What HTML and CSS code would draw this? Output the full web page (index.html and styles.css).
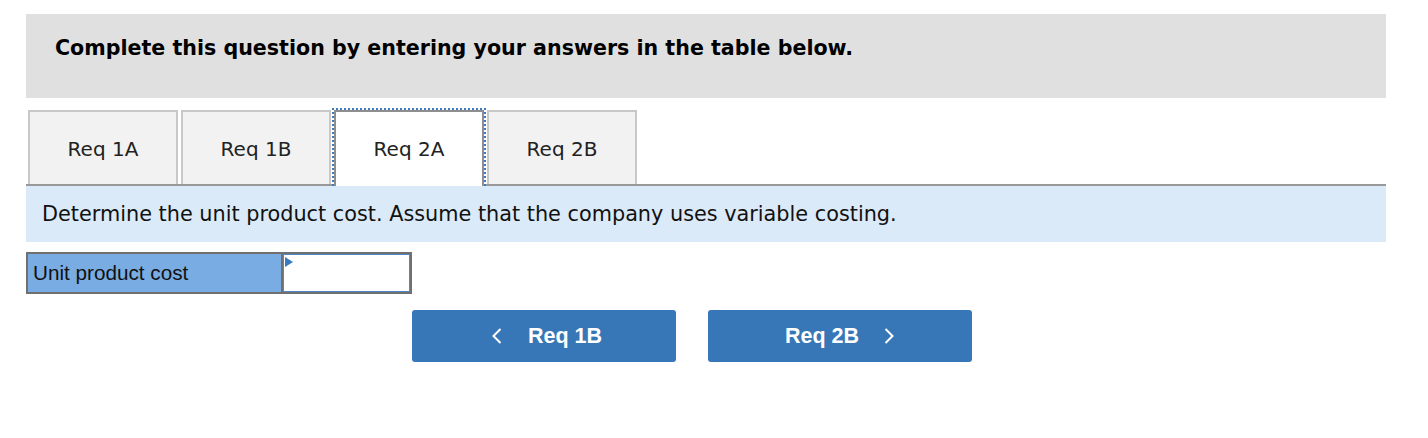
FILE: index.html
```html
<!DOCTYPE html>
<html>
<head>
<meta charset="utf-8">
<link rel="stylesheet" href="styles.css">
</head>
<body>
<div class="page">
  <div class="header">Complete this question by entering your answers in the table below.</div>
  <div class="tabs">
    <div class="tab">Req 1A</div>
    <div class="tab">Req 1B</div>
    <div class="tab active">Req 2A</div>
    <div class="tab">Req 2B</div>
  </div>
  <div class="prompt">Determine the unit product cost. Assume that the company uses variable costing.</div>
  <div class="answer">
    <div class="label">Unit product cost</div>
    <div class="input"><span class="flag"></span></div>
  </div>
  <div class="nav">
    <button class="btn prev"><svg class="chev" width="10" height="16" viewBox="0 0 10 16"><polyline points="8.5,1 1.5,8 8.5,15" fill="none" stroke="#fff" stroke-width="2"/></svg><span>Req 1B</span></button>
    <button class="btn next"><span>Req 2B</span><svg class="chev" width="10" height="16" viewBox="0 0 10 16"><polyline points="1.5,1 8.5,8 1.5,15" fill="none" stroke="#fff" stroke-width="2"/></svg></button>
  </div>
</div>
</body>
</html>
```
FILE: styles.css
```css
* { box-sizing: border-box; }
body { margin: 0; background: #fff; }
.page { padding: 14px 42px 0 26px; width: 1428px; }
.header {
  background: #e0e0e0;
  height: 84px;
  padding: 22px 29px 0;
  font-family: "DejaVu Sans", Verdana, sans-serif;
  font-weight: bold;
  font-size: 20.6px;
  line-height: 24px;
  color: #000;
}
.tabs {
  display: flex;
  gap: 3px;
  margin-top: 12px;
  padding-left: 2px;
  border-bottom: 2px solid #999;
  height: 76px;
}
.tab {
  width: 150px;
  height: 74px;
  background: #f2f2f2;
  border: 2px solid #c8c8c8;
  border-bottom: none;
  display: flex;
  align-items: center;
  justify-content: center;
  font-family: "DejaVu Sans", Verdana, sans-serif;
  font-size: 20px;
  color: #222;
  padding-top: 2px;
}
.tab.active {
  background: #fff;
  border-color: #8e8e8e;
  height: 76px;
  position: relative;
  z-index: 1;
  padding-bottom: 2px;
}
.tab.active::before {
  content: "";
  position: absolute;
  left: -4px;
  right: -4px;
  top: -4px;
  bottom: 0;
  border: 2px dotted #3d7cc4;
  border-bottom: none;
}
.prompt {
  background: #dbeaf8;
  height: 56px;
  padding: 15px 16px 0;
  font-family: "DejaVu Sans", Verdana, sans-serif;
  font-size: 20.8px;
  line-height: 26px;
  color: #111;
}
.answer {
  display: flex;
  margin-top: 10px;
  width: 386px;
  height: 42px;
  border: 2px solid #707070;
}
.label {
  width: 255px;
  background: #79ace2;
  border-right: 2px solid #707070;
  font-family: "Liberation Sans", Arial, sans-serif;
  font-size: 20.7px;
  line-height: 38px;
  padding-left: 5px;
  color: #111;
}
.input {
  flex: 1;
  background: #fff;
  border: 1px solid #4f86c6;
  position: relative;
}
.flag {
  position: absolute;
  left: 1px;
  top: 2px;
  width: 0;
  height: 0;
  border-top: 5px solid transparent;
  border-bottom: 5px solid transparent;
  border-left: 8px solid #3a78c0;
}
.nav {
  display: flex;
  gap: 32px;
  margin-top: 16px;
  padding-left: 386px;
}
.btn {
  width: 264px;
  height: 52px;
  background: #3877b7;
  border: none;
  border-radius: 3px;
  color: #fff;
  font-family: "Liberation Sans", Arial, sans-serif;
  font-weight: bold;
  font-size: 21.5px;
  display: flex;
  align-items: center;
  justify-content: flex-start;
  padding: 0;
}
.btn.prev { padding-left: 80px; gap: 26px; }
.btn.next { padding-left: 77px; gap: 25px; }
.chev { display: block; }
```
